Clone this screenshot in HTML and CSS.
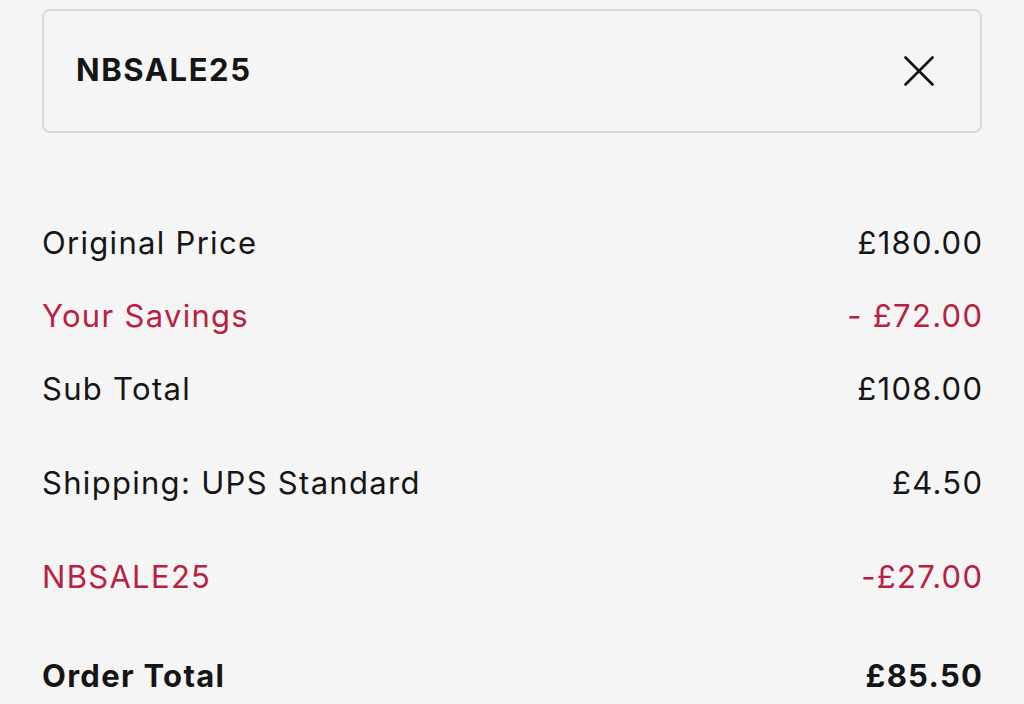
FILE: index.html
```html
<!DOCTYPE html>
<html lang="en">
<head>
<meta charset="utf-8">
<title>Order summary</title>
<link rel="stylesheet" href="styles.css">
</head>
<body>
<main class="checkout">
  <div class="promo-field">
    <span class="promo-code">NBSALE25</span>
    <button class="promo-clear" type="button" aria-label="Remove code">
      <svg viewBox="0 0 30 30" width="30" height="30" aria-hidden="true">
        <path d="M1.5 1.5 L28.5 28.5 M28.5 1.5 L1.5 28.5" stroke="#111" stroke-width="2.6" stroke-linecap="round" fill="none"/>
      </svg>
    </button>
  </div>

  <dl class="summary">
    <div class="row"><dt>Original Price</dt><dd>£180.00</dd></div>
    <div class="row discount"><dt>Your Savings</dt><dd>- £72.00</dd></div>
    <div class="row"><dt>Sub Total</dt><dd>£108.00</dd></div>
    <div class="row spaced"><dt>Shipping: UPS Standard</dt><dd>£4.50</dd></div>
    <div class="row spaced discount"><dt>NBSALE25</dt><dd>-£27.00</dd></div>
    <div class="row total"><dt>Order Total</dt><dd>£85.50</dd></div>
  </dl>
</main>
</body>
</html>
```

FILE: styles.css
```css
html, body {
  margin: 0;
  padding: 0;
  background: #f5f5f5;
}

body {
  font-family: "Inter", "Lato", "Noto Sans", "Liberation Sans", sans-serif;
  color: #151515;
}

.checkout {
  padding: 9px 42px 0 42px;
}

.promo-field {
  box-sizing: border-box;
  height: 124px;
  border: 2px solid #d9d9d9;
  border-radius: 8px;
  display: flex;
  align-items: center;
  justify-content: space-between;
  padding: 0 46px 0 32px;
}

.promo-code {
  font-size: 31px;
  font-weight: 700;
  letter-spacing: 1.6px;
  margin-top: -4px;
}

.promo-clear {
  border: 0;
  background: none;
  padding: 0;
  width: 30px;
  height: 30px;
  display: flex;
}

.summary {
  margin: 89px 0 0 0;
  display: flex;
  flex-direction: column;
  gap: 33px;
}

.row {
  height: 40px;
  display: flex;
  align-items: center;
  justify-content: space-between;
  font-size: 31px;
  letter-spacing: 1.3px;
}

.row dt,
.row dd {
  margin: 0;
}

.row dd {
  margin-right: -1.3px;
}

.row.spaced {
  margin-top: 21px;
}

.row.discount {
  color: #b8213f;
}

.row.total {
  margin-top: 26px;
  font-weight: 700;
}
```
